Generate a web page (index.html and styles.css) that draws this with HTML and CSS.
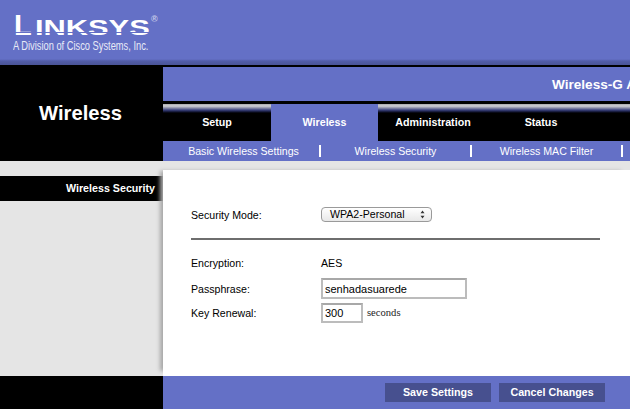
FILE: index.html
```html
<!DOCTYPE html>
<html lang="en">
<head>
<meta charset="utf-8">
<title>Wireless Security</title>
<link rel="stylesheet" href="styles.css">
</head>
<body>
<div class="page">
  <header class="brand">
    <div class="logo"><span class="logo-l">L</span><span class="logo-rest">INKSYS</span><span class="logo-r">®</span></div>
    <div class="tagline">A Division of Cisco Systems, Inc.</div>
  </header>
  <section class="masthead">
    <h1 class="section-title">Wireless</h1>
    <div class="nav-col">
      <div class="product"><span class="product-name">Wireless-G Access Point</span></div>
      <nav class="tabs">
        <a class="tab">Setup</a>
        <a class="tab tab-active">Wireless</a>
        <a class="tab">Administration</a>
        <a class="tab">Status</a>
      </nav>
      <nav class="subnav">
        <a class="sub sub-first">Basic Wireless Settings</a>
        <a class="sub">Wireless Security</a>
        <a class="sub">Wireless MAC Filter</a>
      </nav>
    </div>
  </section>
  <main class="body-row">
    <aside class="sidebar"><div class="side-item">Wireless Security</div></aside>
    <div class="panel">
      <div class="form-row first-row">
        <span class="label">Security Mode:</span>
        <div class="select"><span>WPA2-Personal</span>
          <svg class="updown" width="5" height="9" viewBox="0 0 5 9"><path d="M2.5 0.5 L4.5 3.2 H0.5 Z M2.5 8.5 L4.5 5.8 H0.5 Z" fill="#333"/></svg>
        </div>
      </div>
      <hr class="rule">
      <div class="form-row enc-row"><span class="label">Encryption:</span><span class="value">AES</span></div>
      <div class="form-row pass-row"><span class="label">Passphrase:</span><input class="field field-long" value="senhadasuarede"></div>
      <div class="form-row key-row"><span class="label">Key Renewal:</span><input class="field field-short" value="300"><span class="unit">seconds</span></div>
    </div>
  </main>
  <footer class="foot">
    <div class="foot-side"></div>
    <div class="foot-bar">
      <button class="btn">Save Settings</button>
      <button class="btn">Cancel Changes</button>
    </div>
  </footer>
</div>
</body>
</html>
```
FILE: styles.css
```css
* { box-sizing: border-box; }
html, body { margin: 0; padding: 0; background: #fff; }
.page {
  width: 630px;
  height: 409px;
  overflow: hidden;
  display: flex;
  flex-direction: column;
  font-family: "Liberation Sans", Arial, sans-serif;
  color: #000;
}
.brand {
  height: 65px;
  flex: none;
  background: linear-gradient(to bottom, #6470c6 0, #6470c6 59px, #525da8 61px, #4a5497 65px);
  padding: 15px 0 0 13px;
  color: #fff;
}
.logo {
  height: 21px;
  display: flex;
  align-items: flex-end;
  padding-left: 1px;
  font-weight: bold;
  white-space: nowrap;
  position: relative;
}
.logo::after {
  content: "";
  position: absolute;
  left: 0;
  width: 140px;
  bottom: 3px;
  height: 1px;
  background: #6470c6;
}
.logo-l { font-size: 29px; line-height: 21px; width: 21px; }
.logo-rest { font-size: 22px; line-height: 16px; transform: scaleX(1.4); transform-origin: left bottom; width: 116px; }
.logo-r { font-size: 9px; line-height: 9px; align-self: flex-start; color: #c5cae8; }
.tagline {
  margin-top: 3px;
  font-size: 12px;
  line-height: 14px;
  white-space: nowrap;
  color: #e8eaf6;
  transform: scaleX(0.775);
  transform-origin: left center;
  width: 170px;
}
.masthead {
  height: 96px;
  flex: none;
  display: flex;
  background: #000;
}
.section-title {
  width: 163px;
  flex: none;
  margin: 0;
  padding: 35px 2px 0 0;
  text-align: center;
  color: #fff;
  font-size: 20.2px;
  line-height: 26px;
  font-weight: bold;
}
.nav-col { flex: 1; min-width: 0; padding-top: 2px; display: flex; flex-direction: column; }
.product {
  height: 34px;
  background: #6470c6;
  padding: 9px 0 0 389px;
  color: #fff;
  font-size: 13.6px;
  line-height: 17px;
  font-weight: bold;
  white-space: nowrap;
  overflow: hidden;
}
.tabs {
  margin-top: 3px;
  height: 37px;
  display: flex;
  background: linear-gradient(to bottom, #a9a9ad 0, #d0d0d4 2px, #8b8da8 4px, #3c4480 6px, #10132e 8px, #000 9px);
}
.tab {
  width: 108px;
  padding-top: 12px;
  text-align: center;
  color: #fff;
  font-size: 10.7px;
  line-height: 13px;
  font-weight: bold;
}
.tab:nth-child(n+3) { padding-left: 2px; }
.tab-active { background: #6470c6; width: 107px; }
.subnav { height: 20px; display: flex; background: #6470c6; }
.sub {
  width: 151px;
  height: 20px;
  padding: 4px 2px 0 0;
  text-align: center;
  color: #fff;
  font-size: 10.6px;
  line-height: 13px;
  white-space: nowrap;
  position: relative;
}
.sub::after {
  content: "";
  position: absolute;
  right: 0;
  top: 4px;
  width: 2px;
  height: 12px;
  background: #fff;
}
.sub-first { width: 158px; padding-left: 5px; }
.body-row { flex: 1; min-height: 0; display: flex; background: #e5e5e5; }
.sidebar { width: 163px; flex: none; padding-top: 15px; }
.side-item {
  height: 25px;
  background: #000;
  color: #fff;
  text-align: right;
  padding: 5px 8px 0 0;
  font-size: 10.7px;
  line-height: 14px;
  font-weight: bold;
}
.panel {
  flex: 1;
  margin-top: 9px;
  background: #fff;
  position: relative;
  padding: 36px 30px 0 28px;
  font-size: 10.6px;
  box-shadow: -6px -2px 4px -3px #a8a8a8;
}
.form-row { display: flex; align-items: center; line-height: 14px; }
.label { width: 130px; flex: none; }
.first-row { height: 17px; }
.select {
  width: 111px;
  height: 15px;
  border: 1px solid #9a9a9a;
  border-radius: 4px;
  background: linear-gradient(to bottom, #fff, #e8e8e8);
  padding: 0 6px 0 8px;
  display: flex;
  align-items: center;
  justify-content: space-between;
  line-height: 13px;
}
.rule { margin: 15px 0 0; height: 2px; border: 0; background: #6e6e6e; }
.enc-row { margin-top: 14px; height: 18px; }
.pass-row { margin-top: 6px; height: 21px; }
.key-row { margin-top: 4px; height: 20px; }
.field {
  font: 11px "Liberation Sans", Arial, sans-serif;
  height: 100%;
  border: 2px solid #bcbcbc;
  border-top-color: #a8a8a8;
  padding: 0 2px;
  background: #fff;
  color: #000;
  outline: none;
}
.field-long { width: 146px; }
.field-short { width: 42px; }
.unit { font-family: "Liberation Serif", serif; font-size: 10.6px; margin-left: 4px; color: #222; }
.foot { height: 33px; flex: none; display: flex; }
.foot-side { width: 163px; background: #000; }
.foot-bar {
  flex: 1;
  background: #6470c6;
  display: flex;
  gap: 8px;
  padding: 7px 0 0 222px;
}
.btn {
  width: 106px;
  height: 19px;
  border: 0;
  padding: 0;
  background: #47508f;
  color: #fff;
  font: bold 10.7px/13px "Liberation Sans", Arial, sans-serif;
}
```
